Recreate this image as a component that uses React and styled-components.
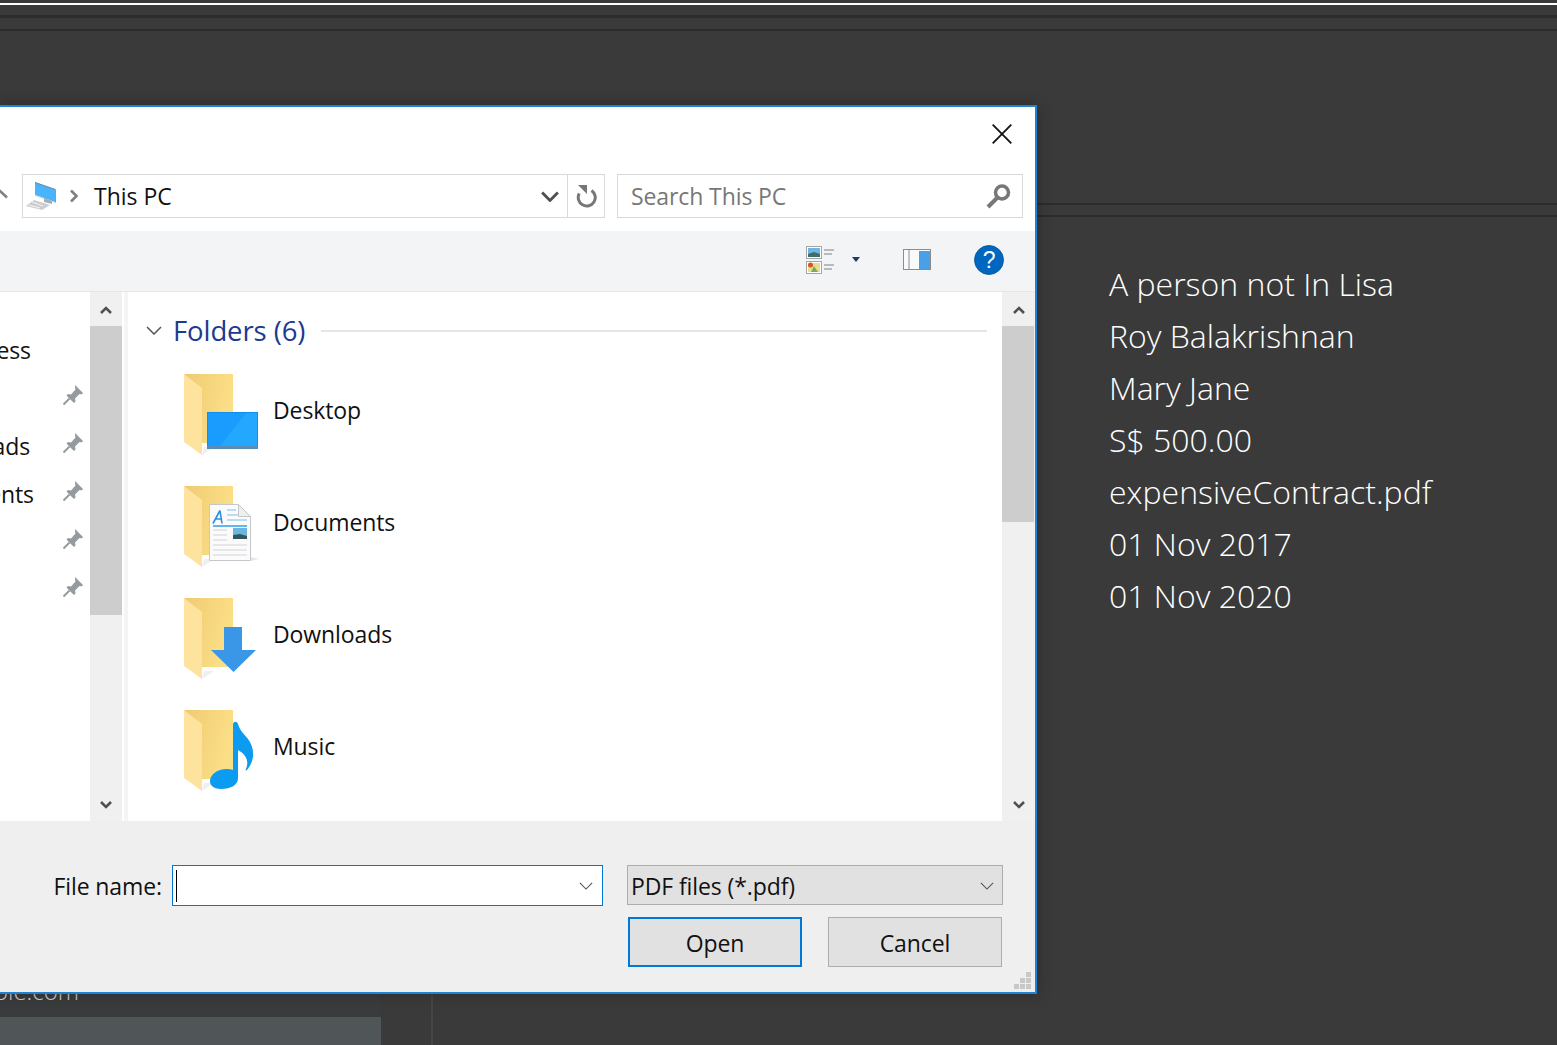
import React from 'react';
import styled, { createGlobalStyle } from 'styled-components';

const GlobalStyle = createGlobalStyle`
  html, body { margin: 0; padding: 0; background: #3a3a3a; }
  body { font-family: "Open Sans", "Noto Sans", sans-serif; }
`;

const Page = styled.div`
  position: relative;
  width: 1557px;
  height: 1045px;
  overflow: hidden;
  background: #3a3a3a;
  display: flex;
  flex-direction: column;
`;

const WhiteRule = styled.div`
  height: 2px;
  margin-top: 3px;
  background: #fff;
  flex: none;
`;

const DarkRule = styled.div`
  height: ${p => p.$h || 2}px;
  margin-top: ${p => p.$top}px;
  background: #2c2c2c;
  flex: none;
`;

const Workspace = styled.div`
  flex: 1;
  display: flex;
  min-height: 0;
`;

const LeftColumn = styled.div`
  width: 381px;
  flex: none;
  display: flex;
  flex-direction: column;
  justify-content: flex-end;
  background: #3a3b3c;
`;

const EmailText = styled.div`
  width: 79px;
  height: 32px;
  margin-bottom: 10px;
  display: flex;
  justify-content: flex-end;
  font-size: 24px;
  font-weight: 300;
  line-height: 32px;
  color: #d0d0d0;
  white-space: nowrap;
`;

const ActiveRow = styled.div`
  height: 28px;
  background: #505558;
`;

const Divider = styled.div`
  width: 2px;
  margin-left: 50px;
  background: #464646;
  flex: none;
`;

const Details = styled.div`
  padding: 41px 0 0 676px;
  color: #fff;
  font-size: 32px;
  font-weight: 300;
  line-height: 52px;
  white-space: nowrap;
`;

const DetailLine = styled.div``;

const Dialog = styled.div`
  position: absolute;
  left: 0;
  top: 105px;
  width: 1037px;
  height: 889px;
  box-sizing: border-box;
  border: 2px solid #1e82d6;
  border-left: none;
  background: #fff;
  box-shadow: 0 0 14px rgba(0, 0, 0, 0.28);
  display: flex;
  flex-direction: column;
  color: #111;
  letter-spacing: -0.1px;
`;

const TitleBar = styled.div`
  height: 67px;
  flex: none;
  display: flex;
  justify-content: flex-end;
  align-items: flex-start;
  padding: 17px 23px 0 0;
  box-sizing: border-box;
`;

const AddressRow = styled.div`
  height: 44px;
  flex: none;
  display: flex;
  align-items: stretch;
  position: relative;
  padding-left: 22px;
`;

const BackArrow = styled.svg`
  position: absolute;
  left: 0;
  top: 15px;
`;

const FieldBox = styled.div`
  box-sizing: border-box;
  border: 1px solid #d9d9d9;
  display: flex;
  align-items: center;
  width: ${p => p.$w}px;
  margin-left: ${p => p.$ml || 0}px;
  font-size: 23px;
  background: #fff;
`;

const PathText = styled.span`
  margin-left: 15px;
  flex: 1;
  color: #111;
  letter-spacing: 0;
`;

const FieldButton = styled.div`
  height: 100%;
  width: ${p => p.$w}px;
  display: flex;
  align-items: center;
  justify-content: center;
  flex: none;
  box-sizing: border-box;
  padding-left: ${p => p.$pad || 0}px;
  border-left: ${p => (p.$line ? '1px solid #d9d9d9' : 'none')};
`;

const SearchText = styled.span`
  flex: 1;
  margin-left: 13px;
  color: #777;
`;

const Toolbar = styled.div`
  margin-top: 13px;
  height: 61px;
  flex: none;
  box-sizing: border-box;
  background: #f3f4f6;
  border-bottom: 1px solid #e6e6e6;
  display: flex;
  align-items: center;
  padding: 0 0 3px 806px;
`;

const ToolIcon = styled.svg`
  flex: none;
  margin-left: ${p => p.$ml || 0}px;
  display: block;
`;

const Panes = styled.div`
  height: 529px;
  flex: none;
  display: flex;
`;

const NavPane = styled.div`
  width: 90px;
  flex: none;
  padding-top: 34px;
  overflow: hidden;
`;

const NavRow = styled.div`
  height: 48px;
  position: relative;
  font-size: 23px;
  line-height: 48px;
  display: flex;
  justify-content: flex-end;
  width: ${p => p.$end}px;
  white-space: nowrap;
`;

const PinSlot = styled.svg`
  position: absolute;
  top: 10px;
  left: 62px;
`;

const ScrollBar = styled.div`
  width: ${p => p.$w}px;
  flex: none;
  background: #f0f0f0;
  display: flex;
  flex-direction: column;
  align-items: center;
  justify-content: space-between;
  position: relative;
`;

const ScrollThumb = styled.div`
  position: absolute;
  left: 0;
  right: ${p => p.$right || 0}px;
  top: 34px;
  height: ${p => p.$h}px;
  background: #cdcdcd;
`;

const ScrollArrow = styled.svg`
  margin: ${p => (p.$down ? '0 0 12px' : '14px 0 0')};
  display: block;
`;

const Splitter = styled.div`
  width: 4px;
  margin-left: 2px;
  flex: none;
  background: #f5f5f5;
`;

const ContentPane = styled.div`
  flex: 1;
  min-width: 0;
  overflow: hidden;
  background: #fff;
`;

const GroupHeader = styled.div`
  height: 78px;
  display: flex;
  align-items: center;
  padding: 0 15px 2px 18px;
  box-sizing: border-box;
  margin-bottom: 4px;
`;

const GroupTitle = styled.span`
  margin-left: 11px;
  font-size: 27.5px;
  color: #1c3a8f;
  white-space: nowrap;
`;

const GroupLine = styled.div`
  flex: 1;
  height: 2px;
  margin: 2px 0 0 16px;
  background: #e5e5e5;
`;

const FolderRow = styled.div`
  height: 112px;
  display: flex;
  align-items: flex-start;
  padding-left: 56px;
`;

const FolderArt = styled.svg`
  flex: none;
  display: block;
`;

const FolderLabel = styled.span`
  margin: 21px 0 0 9px;
  font-size: 23px;
  line-height: 30px;
  color: #111;
`;

const Footer = styled.div`
  flex: 1;
  background: #efefef;
  position: relative;
  display: grid;
  grid-template-columns: 172px 431px 400px;
  grid-template-rows: 41px 50px;
  row-gap: 11px;
  padding-top: 44px;
  box-sizing: border-box;
  font-size: 23px;
`;

const FileLabel = styled.label`
  display: flex;
  align-items: center;
  justify-content: flex-end;
  padding-right: 10px;
  white-space: nowrap;
`;

const NameInput = styled.div`
  box-sizing: border-box;
  border: 1.5px solid #0078d7;
  background: #fff;
  display: flex;
  align-items: center;
  justify-content: space-between;
  padding: 0 9px 0 3px;
`;

const Caret = styled.span`
  width: 1px;
  height: 32px;
  background: #000;
`;

const TypeSelect = styled.div`
  box-sizing: border-box;
  height: 40px;
  margin-left: 24px;
  border: 1.5px solid #adadad;
  background: #e1e1e1;
  display: flex;
  align-items: center;
  justify-content: space-between;
  padding: 2px 8px 0 3px;
`;

const Buttons = styled.div`
  grid-column: 3;
  margin-left: 24px;
  display: flex;
  justify-content: space-between;
  padding: 0 1px;
`;

const ActionButton = styled.div`
  width: 174px;
  box-sizing: border-box;
  padding-top: 2px;
  background: #e1e1e1;
  border: ${p => (p.$primary ? '2px solid #0078d7' : '1px solid #adadad')};
  display: flex;
  align-items: center;
  justify-content: center;
`;

const Grip = styled.svg`
  position: absolute;
  right: 4px;
  bottom: 3px;
`;

const Chevron = ({ w = 16, h = 9, stroke = '#555', sw = 1.5 }) => (
  <svg width={w} height={h} viewBox="0 0 16 9" style={{ display: 'block' }}>
    <path d="M1 1l7 7 7-7" fill="none" stroke={stroke} strokeWidth={sw} />
  </svg>
);

const FolderBase = ({ children }) => (
  <FolderArt width="80" height="86" viewBox="0 0 80 86">
    <defs>
      <linearGradient id="folderBack" x1="0" y1="0" x2="1" y2="0.3">
        <stop offset="0" stopColor="#efcb72" />
        <stop offset="1" stopColor="#fbdf87" />
      </linearGradient>
    </defs>
    <path d="M18 81l12-8H20z" fill="#efefef" />
    <path d="M0 0h49v69H18z" fill="url(#folderBack)" />
    <path d="M0 0l18 14v67L0 68z" fill="#fde39e" />
    {children}
  </FolderArt>
);

const DesktopBadge = () => (
  <>
    <rect x="23" y="38" width="51" height="37" fill="#0f8ff0" />
    <path d="M24 39h49v33H24z" fill="#1a9cff" />
    <path d="M36 72L62 39h11v33z" fill="#24a8ff" />
    <rect x="23" y="72" width="51" height="3" fill="#5a8db5" />
  </>
);

const DocumentBadge = () => (
  <>
    <path d="M67 75l8-2-8-2z" fill="#e8e8e8" />
    <path d="M25.500 18.500h29l12 12v44h-41z" fill="#fbfbfb" stroke="#c4c8cc" />
    <path d="M54.500 18.500v12h12z" fill="#eceef0" stroke="#c4c8cc" />
    <path d="M29 37.500l7-13M36 24.500l2 13M32 33h6" fill="none" stroke="#2a90de" strokeWidth="1.600" />
    <path d="M43 24h9M43 29h11M43 34h20" stroke="#a6d4f2" strokeWidth="1.500" />
    <path d="M29 40h34" stroke="#2f9fe8" strokeWidth="1.500" />
    <path d="M29 44h14M29 49h14M29 54h14M29 59h34M29 64h34M29 69h34" stroke="#cfd3d6" strokeWidth="1.200" />
    <rect x="49" y="42" width="14" height="11" fill="#6cb7e0" />
    <path d="M49 49l7-1 7 2v3H49z" fill="#33565f" />
  </>
);

const ArrowBadge = () => <path d="M40 29h18v23h14L49.500 74 27 52h13z" fill="#3a97e8" />;

const MusicBadge = () => (
  <path
    d="M49 15c0-4 4-4 5-1 1 5 5 9 10 15 6 8 8 20-1 31-1 1-2 0-1-1 3-7 1-14-8-19v28c0 7-7 11-17 11-8 0-11-4-11-8 0-7 8-12 16-12 3 0 5 0 7 1z"
    fill="#0b9bf0"
  />
);

const PinIcon = () => (
  <PinSlot width="22" height="22" viewBox="0 0 22 22">
    <path d="M13 1l8 8-1.500 1.500-2-.5-4.500 4.500.5 3-1.500 1.500-7.500-7.500 1.500-1.500 3 .5L13.500 5.500l-.5-2z" fill="#939ba0" />
    <path d="M1.500 20.500l6-6" stroke="#939ba0" strokeWidth="2" />
  </PinSlot>
);

const PcIcon = () => (
  <svg width="32" height="30" viewBox="0 0 32 30" style={{ display: 'block', flex: 'none', marginLeft: 3 }}>
    <path d="M29 8l1 .500V22l-1-1z" fill="#8f9aa2" />
    <path d="M9 1l20 7v13L9 14z" fill="#49b3fc" />
    <path d="M9 1l20 7v1L9 2z" fill="#6f8ea4" />
    <path d="M9 14l20 7v1L9 15z" fill="#d5dade" />
    <path d="M18 17l8 3v3l-8-2z" fill="#a3adb3" />
    <path d="M8 19l16 5-8 5L0 25z" fill="#c9cdd0" />
    <path d="M6 21l11 4M3 24l11 3" stroke="#f4f4f4" strokeWidth="1" />
  </svg>
);

const folders = [
  { name: 'Desktop', badge: <DesktopBadge /> },
  { name: 'Documents', badge: <DocumentBadge /> },
  { name: 'Downloads', badge: <ArrowBadge /> },
  { name: 'Music', badge: <MusicBadge /> },
];

const navItems = [
  { name: 'Quick access', end: 31 },
  { name: 'Desktop', end: 0, pin: true },
  { name: 'Downloads', end: 30, pin: true },
  { name: 'Documents', end: 34, pin: true },
  { name: 'Pictures', end: 0, pin: true },
  { name: 'Videos', end: 0, pin: true },
];

const details = [
  'A person not In Lisa',
  'Roy Balakrishnan',
  'Mary Jane',
  'S$ 500.00',
  'expensiveContract.pdf',
  '01 Nov 2017',
  '01 Nov 2020',
];

const App = () => (
  <Page>
    <GlobalStyle />
    <WhiteRule />
    <DarkRule $top={10} $h={3} />
    <DarkRule $top={11} />
    <DarkRule $top={172} />
    <DarkRule $top={10} />
    <Workspace>
      <LeftColumn>
        <EmailText>support@example.com</EmailText>
        <ActiveRow />
      </LeftColumn>
      <Divider />
      <Details>
        {details.map(line => <DetailLine key={line}>{line}</DetailLine>)}
      </Details>
    </Workspace>

    <Dialog>
      <TitleBar>
        <svg width="20" height="20" viewBox="0 0 20 20" style={{ display: 'block' }}>
          <path d="M.7.700l18.600 18.600M19.300.700L.7 19.300" stroke="#111" strokeWidth="1.800" />
        </svg>
      </TitleBar>

      <AddressRow>
        <BackArrow width="9" height="10" viewBox="0 0 9 10">
          <path d="M-1 1l8 7.500" stroke="#808080" strokeWidth="2.600" fill="none" />
        </BackArrow>
        <FieldBox $w={583}>
          <PcIcon />
          <svg width="10" height="14" viewBox="0 0 10 14" style={{ marginLeft: 11, flex: 'none' }}>
            <path d="M2 1.500l5.500 5.500L2 12.500" fill="none" stroke="#808080" strokeWidth="2.600" />
          </svg>
          <PathText>This PC</PathText>
          <FieldButton $w={37} $pad={2}>
            <Chevron w={18} h={11} stroke="#505050" sw={2.6} />
          </FieldButton>
          <FieldButton $w={37} $line $pad={2}>
            <svg width="22" height="24" viewBox="0 0 22 24">
              <path d="M15.500 6.400A8.500 8.500 0 1 1 3.200 9.500" fill="none" stroke="#777" strokeWidth="3" />
              <path d="M2 1h9v9z" fill="#777" />
            </svg>
          </FieldButton>
        </FieldBox>
        <FieldBox $w={406} $ml={12}>
          <SearchText>Search This PC</SearchText>
          <svg width="26" height="26" viewBox="0 0 26 26" style={{ marginRight: 10, flex: 'none' }}>
            <circle cx="16" cy="9.500" r="6.500" fill="none" stroke="#777" strokeWidth="3.500" />
            <path d="M11 15l-9 9" stroke="#777" strokeWidth="4" />
          </svg>
        </FieldBox>
      </AddressRow>

      <Toolbar>
        <ToolIcon width="28" height="28" viewBox="0 0 28 28">
          <rect x=".5" y=".5" width="15" height="12" fill="#fff" stroke="#a5a5a5" />
          <rect x="2" y="2" width="12" height="9" fill="#6fb4e6" />
          <path d="M2 8l6-2 6 2v3H2z" fill="#3f6f68" />
          <rect x=".5" y="15.500" width="15" height="12" fill="#fff" stroke="#a5a5a5" />
          <rect x="2" y="17" width="12" height="9" fill="#e6e08c" />
          <path d="M5 26l3-6 4 6z" fill="#7da860" />
          <circle cx="4.500" cy="19" r="2.500" fill="#d9551f" />
          <path d="M18 4h10M18 8h8M18 19h10M18 23h8" stroke="#808080" strokeWidth="1.200" />
        </ToolIcon>
        <ToolIcon $ml={18} width="8" height="5" viewBox="0 0 8 5">
          <path d="M0 0h8L4 5z" fill="#1f3a68" />
        </ToolIcon>
        <ToolIcon $ml={43} width="28" height="21" viewBox="0 0 28 21">
          <rect x=".5" y=".5" width="27" height="20" fill="#fafafa" stroke="#8c8c8c" />
          <rect x="16" y="2" width="11" height="18" fill="#4aa0e6" />
          <path d="M6 1v19" stroke="#8c8c8c" />
        </ToolIcon>
        <ToolIcon $ml={43} width="30" height="30" viewBox="0 0 30 30">
          <circle cx="15" cy="15" r="14.500" fill="#0067c0" stroke="#064f8e" strokeWidth=".8" />
          <text x="15" y="23" textAnchor="middle" fontSize="23" fill="#fff" fontFamily="Liberation Sans, sans-serif">?</text>
        </ToolIcon>
      </Toolbar>

      <Panes>
        <NavPane>
          {navItems.map(item => (
            <NavRow key={item.name} $end={item.end}>
              {item.name}
              {item.pin && <PinIcon />}
            </NavRow>
          ))}
        </NavPane>
        <ScrollBar $w={32}>
          <ScrollThumb $h={289} />
          <ScrollArrow width="12" height="8" viewBox="0 0 12 8">
            <path d="M1 7l5-5 5 5" fill="none" stroke="#505050" strokeWidth="2.600" />
          </ScrollArrow>
          <ScrollArrow $down width="12" height="8" viewBox="0 0 12 8">
            <path d="M1 1l5 5 5-5" fill="none" stroke="#505050" strokeWidth="2.600" />
          </ScrollArrow>
        </ScrollBar>
        <Splitter />
        <ContentPane>
          <GroupHeader>
            <Chevron />
            <GroupTitle>Folders (6)</GroupTitle>
            <GroupLine />
          </GroupHeader>
          {folders.map(folder => (
            <FolderRow key={folder.name}>
              <FolderBase>{folder.badge}</FolderBase>
              <FolderLabel>{folder.name}</FolderLabel>
            </FolderRow>
          ))}
        </ContentPane>
        <ScrollBar $w={33}>
          <ScrollThumb $h={196} $right={1} />
          <ScrollArrow width="12" height="8" viewBox="0 0 12 8">
            <path d="M1 7l5-5 5 5" fill="none" stroke="#505050" strokeWidth="2.600" />
          </ScrollArrow>
          <ScrollArrow $down width="12" height="8" viewBox="0 0 12 8">
            <path d="M1 1l5 5 5-5" fill="none" stroke="#505050" strokeWidth="2.600" />
          </ScrollArrow>
        </ScrollBar>
      </Panes>

      <Footer>
        <FileLabel>File name:</FileLabel>
        <NameInput>
          <Caret />
          <Chevron w={14} h={8} sw={1.3} />
        </NameInput>
        <TypeSelect>
          PDF files (*.pdf)
          <Chevron w={14} h={8} sw={1.3} />
        </TypeSelect>
        <Buttons>
          <ActionButton $primary>Open</ActionButton>
          <ActionButton>Cancel</ActionButton>
        </Buttons>
        <Grip width="17" height="17" viewBox="0 0 17 17">
          <path d="M12 0h5v5h-5zM6 6h5v5H6zM12 6h5v5h-5zM0 12h5v5H0zM6 12h5v5H6zM12 12h5v5h-5z" fill="#c8c8c8" />
        </Grip>
      </Footer>
    </Dialog>
  </Page>
);

export default App;
